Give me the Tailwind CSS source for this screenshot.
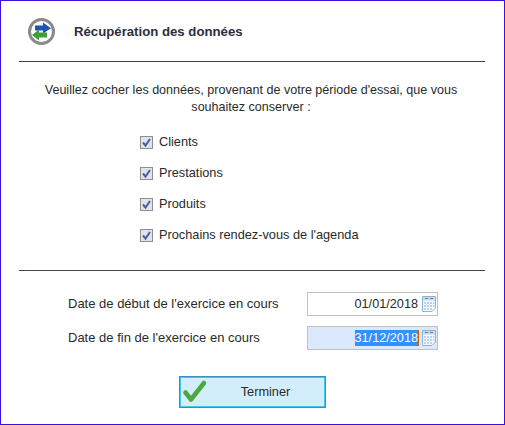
<!DOCTYPE html>
<html lang="en">
<head>
    <meta charset="UTF-8">
    <title>Récupération des données</title>
    <script src="https://cdn.jsdelivr.net/npm/@tailwindcss/browser@4"></script>
</head>
<body class="bg-white">
    <div class="w-[505px] h-[425px] box-border overflow-hidden border border-[#3a10e0] font-['Liberation_Sans',sans-serif] text-[12.750px] text-[#2a2a2a]">
        <div class="h-[60px] flex items-center pl-[26px]">
            <svg width="30" height="30" viewBox="0 0 30 30" class="mt-[1px]">
                <circle cx="14.500" cy="14.500" r="12" fill="#fff" stroke="#8a8a8a" stroke-width="3"/>
                <path d="M8 8.500h8V5.500l8 5.800-8 5.200v-3H8z" fill="#1a55b5"/>
                <path d="M20 15.500h-8v-3l-7 5.500 7 5.600v-3h8z" fill="#3f9e35"/>
            </svg>
            <div class="ml-[17px] mt-[2px] text-[13.200px] font-bold text-[#2b3040]">Récupération des données</div>
        </div>
        <div class="ml-[18px] mr-[19px] h-px bg-[#44444f]"></div>
        <p class="mt-[20px] pr-[3px] text-center text-[12.560px] leading-[17px]">Veuillez cocher les données, provenant de votre période d'essai, que vous<br>souhaitez conserver :</p>
        <div class="mt-[19px] ml-[139px] flex flex-col gap-[17px]">
            <label class="h-[14px] flex items-center gap-[6px]">
                <input type="checkbox" checked class="hidden">
                <svg width="13" height="13" viewBox="0 0 13 13"><rect x="0.500" y="0.500" width="12" height="12" fill="#dfe3ee" stroke="#8e8f8f"/><path d="M3 6.500l2.500 3L10 3" fill="none" stroke="#4a5f9f" stroke-width="2"/></svg>
                Clients
            </label>
            <label class="h-[14px] flex items-center gap-[6px]">
                <input type="checkbox" checked class="hidden">
                <svg width="13" height="13" viewBox="0 0 13 13"><rect x="0.500" y="0.500" width="12" height="12" fill="#dfe3ee" stroke="#8e8f8f"/><path d="M3 6.500l2.500 3L10 3" fill="none" stroke="#4a5f9f" stroke-width="2"/></svg>
                Prestations
            </label>
            <label class="h-[14px] flex items-center gap-[6px]">
                <input type="checkbox" checked class="hidden">
                <svg width="13" height="13" viewBox="0 0 13 13"><rect x="0.500" y="0.500" width="12" height="12" fill="#dfe3ee" stroke="#8e8f8f"/><path d="M3 6.500l2.500 3L10 3" fill="none" stroke="#4a5f9f" stroke-width="2"/></svg>
                Produits
            </label>
            <label class="h-[14px] flex items-center gap-[6px]">
                <input type="checkbox" checked class="hidden">
                <svg width="13" height="13" viewBox="0 0 13 13"><rect x="0.500" y="0.500" width="12" height="12" fill="#dfe3ee" stroke="#8e8f8f"/><path d="M3 6.500l2.500 3L10 3" fill="none" stroke="#4a5f9f" stroke-width="2"/></svg>
                Prochains rendez-vous de l'agenda
            </label>
        </div>
        <div class="mt-[28px] ml-[18px] mr-[19px] h-px bg-[#44444f]"></div>
        <div class="mt-[21px] ml-[67px] flex items-center h-[24px] text-[13px]">
            <div class="w-[239px]">Date de début de l'exercice en cours</div>
            <div class="w-[131px] h-[24px] border border-[#c0c0c0] bg-white flex items-center justify-end pr-[1px] text-[12.700px]">
                <span class="mr-[4px] leading-[16px]">01/01/2018</span>
                <svg width="14" height="16" viewBox="0 0 14 16"><path d="M0.500 0.500h13v11.500l-3.500 3.500h-9.500z" fill="#f2f7fc" stroke="#8fb4d8"/><rect x="1" y="1" width="12" height="3.500" fill="#c4d8ec"/><path d="M3 2.500h3M8 2.500h3" stroke="#6f8294"/><path d="M2 6h2v2H2zM5 6h2v2H5zM8 6h2v2H8zM11 6h1.500v2H11zM2 9h2v2H2zM5 9h2v2H5zM8 9h2v2H8zM11 9h1.500v2H11zM2 12h2v2H2zM5 12h2v2H5zM8 12h2v2H8z" fill="#bcd3f0"/></svg>
            </div>
        </div>
        <div class="mt-[10px] ml-[67px] flex items-center h-[24px] text-[13px]">
            <div class="w-[239px]">Date de fin de l'exercice en cours</div>
            <div class="w-[131px] h-[24px] border border-[#c0c0c0] bg-[#dce8fc] flex items-center justify-end pr-[1px] text-[12.700px]">
                <span class="mr-[3px] leading-[16px] bg-[#3390ff] text-white border-r border-[#d06000]">31/12/2018</span>
                <svg width="14" height="16" viewBox="0 0 14 16"><path d="M0.500 0.500h13v11.500l-3.500 3.500h-9.500z" fill="#f2f7fc" stroke="#8fb4d8"/><rect x="1" y="1" width="12" height="3.500" fill="#c4d8ec"/><path d="M3 2.500h3M8 2.500h3" stroke="#6f8294"/><path d="M2 6h2v2H2zM5 6h2v2H5zM8 6h2v2H8zM11 6h1.500v2H11zM2 9h2v2H2zM5 9h2v2H5zM8 9h2v2H8zM11 9h1.500v2H11zM2 12h2v2H2zM5 12h2v2H5zM8 12h2v2H8z" fill="#bcd3f0"/></svg>
            </div>
        </div>
        <div class="mt-[26px] ml-[178px] w-[147px] h-[32px] border border-[#3a8fbf] shadow-[inset_0_0_0_1px_#3fc8f0] bg-[#d3eefb] flex items-center relative">
            <svg width="26" height="26" viewBox="0 0 26 26" class="absolute left-[2px] top-[2px]"><path d="M3.500 13.500l5.500 7L22 4" fill="none" stroke="#4ea63f" stroke-width="4.500" stroke-linecap="round" stroke-linejoin="round"/></svg>
            <div class="w-full text-center pl-[26px]">Terminer</div>
        </div>
    </div>
</body>
</html>
